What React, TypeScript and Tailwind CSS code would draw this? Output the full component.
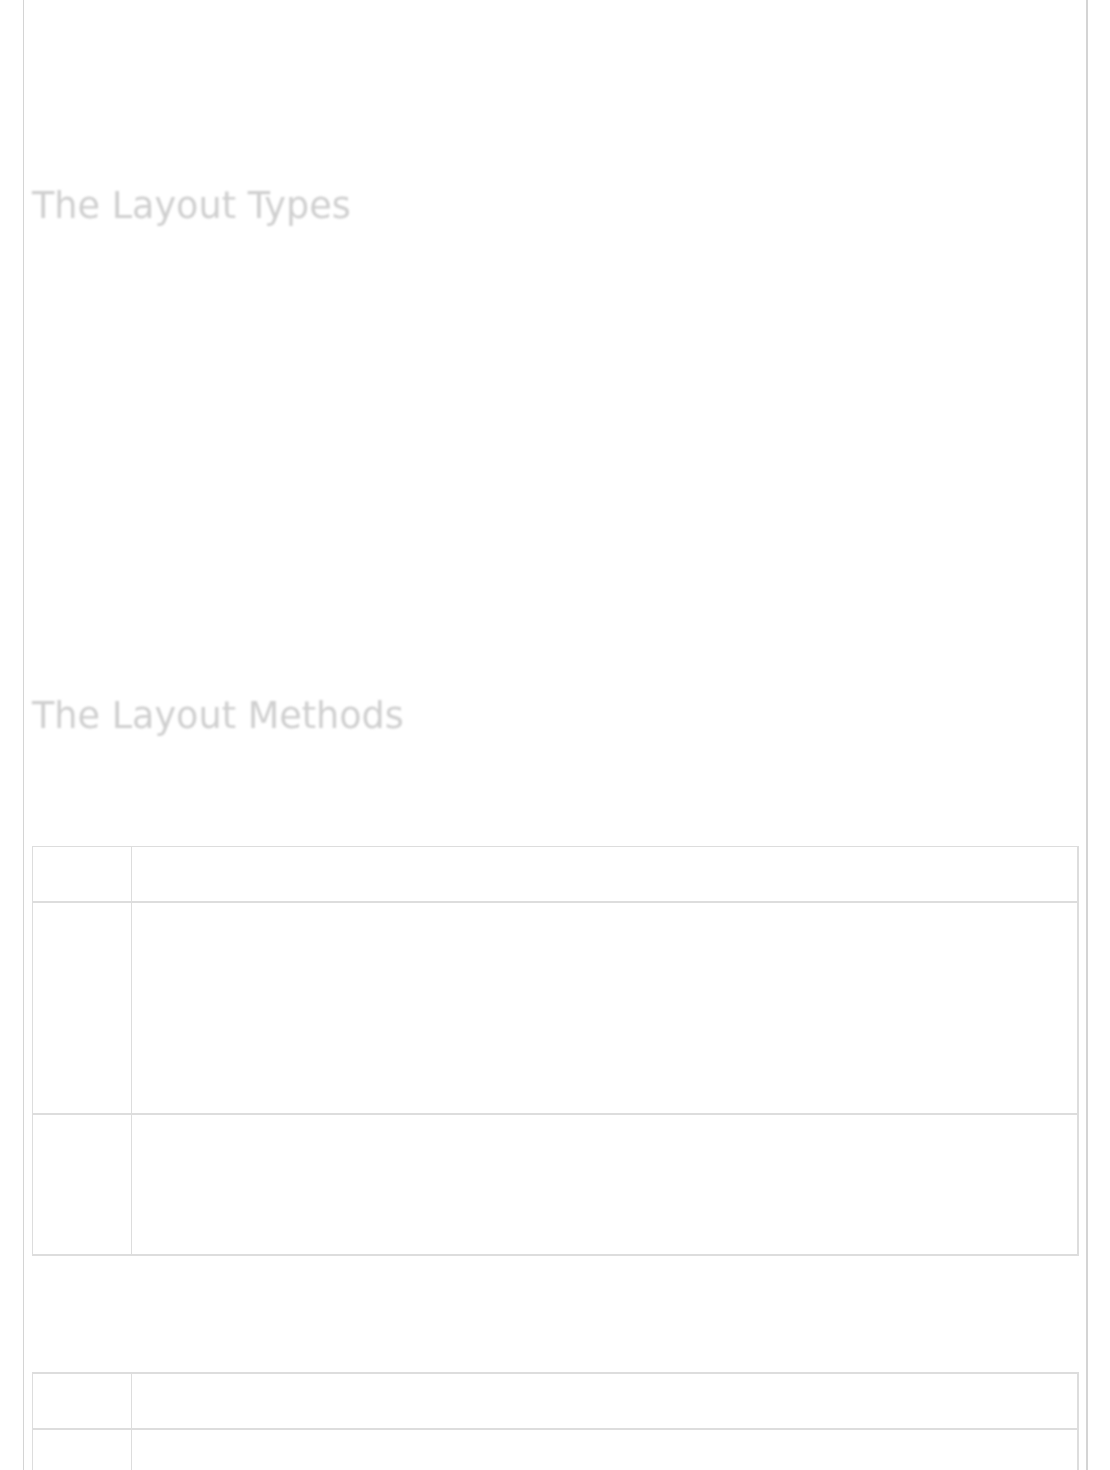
import React from "react";

const Heading = ({ children }: { children: React.ReactNode }) => (
  <h2 className="text-[36.6px] leading-[42px] font-normal text-[#cfcfcf] blur-[1.2px] font-['DejaVu_Sans',Verdana,sans-serif]">
    {children}
  </h2>
);

const cell = "border-b-2 border-[#dddddd] p-0";

const MethodTable = ({ rows, top }: { rows: number[]; top: string }) => (
  <table className={`w-[1047px] border-separate border-spacing-0 border-l border-[#dddddd] ${top}`}>
    <tbody>
      {rows.map((h, i) => (
        <tr key={i}>
          <td className={`${cell} w-[99px] border-r`} style={{ height: h }}></td>
          <td className={`${cell} border-r-2`} style={{ height: h }}></td>
        </tr>
      ))}
    </tbody>
  </table>
);

export default function App() {
  return (
    <div className="h-[1470px] bg-white overflow-hidden">
      <div className="ml-[23px] w-[1065px] min-h-[1470px] border-l border-r-2 border-[#d4d4d4] pl-2 pr-[7px] pt-[185px]">
        <Heading>The Layout Types</Heading>
        <div className="mt-[468px]">
          <Heading>The Layout Methods</Heading>
        </div>
        <div className="mt-[109px]">
          <MethodTable rows={[56, 212, 141]} top="border-t" />
        </div>
        <div className="mt-[116px]">
          <MethodTable rows={[56, 212]} top="border-t-2" />
        </div>
      </div>
    </div>
  );
}
